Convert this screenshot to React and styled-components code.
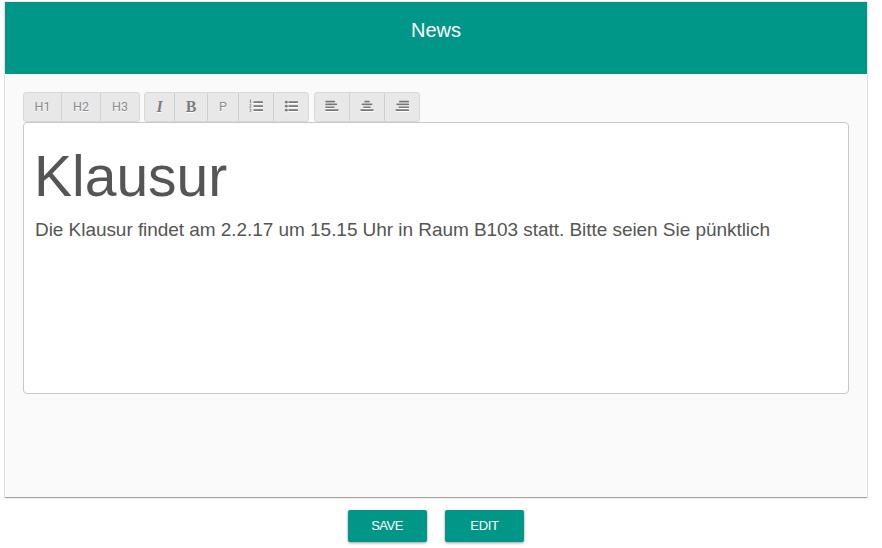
import React from "react";
import styled, { createGlobalStyle } from "styled-components";

const GlobalStyle = createGlobalStyle`
  * { box-sizing: border-box; }
  body { margin: 0; background: #fff; font-family: "Liberation Sans", Arial, sans-serif; }
`;

const Page = styled.main`
  width: 882px;
  height: 548px;
  padding: 2px 15px 0 5px;
  overflow: hidden;
`;

const Card = styled.section`
  height: 495px;
  background: #fafafa;
  box-shadow: 0 1px 1px rgba(0, 0, 0, 0.3), 0 0 1px 1px rgba(0, 0, 0, 0.08);
`;

const Header = styled.header`
  height: 72px;
  padding-top: 16px;
  background: #009688;
  color: #fff;
  font-size: 20px;
  line-height: 24px;
  text-align: center;
`;

const Content = styled.div`
  padding: 18px 18px 0;
`;

const Toolbar = styled.div`
  display: flex;
  height: 30px;
`;

const Group = styled.div`
  display: flex;
  margin-right: ${(p) => p.$gap || 0}px;
  border-radius: 3px;
  overflow: hidden;
  border: 1px solid #d8d8d8;
  background: #e8e8e8;
`;

const Tool = styled.button`
  display: flex;
  align-items: center;
  justify-content: center;
  width: ${(p) => p.$w}px;
  padding: 0 0 ${(p) => (p.$serif ? 0 : 2)}px;
  border: 0;
  border-right: 1px solid #d0d0d0;
  background: none;
  color: ${(p) => (p.$serif ? "#7c7c7c" : "#8a8a8a")};
  font-family: ${(p) => (p.$serif ? '"Liberation Serif", serif' : "Roboto, sans-serif")};
  font-size: ${(p) => (p.$serif ? 16 : 12.5)}px;
  font-style: ${(p) => (p.$italic ? "italic" : "normal")};
  font-weight: ${(p) => (p.$serif ? 700 : 400)};
  text-shadow: 0 1px 0 #fff;
  &:last-child { border-right: 0; }
`;

const Glyph = styled.svg`
  width: 14px;
  height: 14px;
  color: #777;
  filter: drop-shadow(0 1px 0 #fff);
`;

const Editor = styled.div`
  height: 272px;
  padding: 21px 11px;
  border: 1px solid #c8c8c8;
  border-radius: 4px;
  background: #fff;
  color: #555;
`;

const Title = styled.h1`
  margin: 0 0 0 -1px;
  font-size: 57px;
  font-weight: 400;
  line-height: 64px;
`;

const Text = styled.p`
  margin: 10px 0 0;
  font-size: 19px;
  line-height: 24px;
  letter-spacing: -0.05px;
  white-space: nowrap;
`;

const Actions = styled.div`
  display: flex;
  justify-content: center;
  gap: 18px;
  padding-top: 13px;
`;

const Action = styled.button`
  width: 79px;
  height: 32px;
  padding: 0 ${(p) => p.$inset || 0}px 2px 0;
  border: 0;
  border-radius: 2px;
  background: #009688;
  color: #fff;
  font-family: "Liberation Sans", Arial, sans-serif;
  font-size: 13px;
  letter-spacing: ${(p) => p.$spacing || 0}px;
  box-shadow: 0 1px 3px rgba(0, 0, 0, 0.4);
`;

const lines = {
  left: [[0.3, 9.7], [0.3, 11.7], [0.3, 9.2], [0.3, 13.2]],
  center: [[4.3, 5.4], [1.7, 10.6], [3.3, 7.4], [0.5, 13]],
  right: [[4, 10], [1.5, 12.5], [3.7, 10.3], [0.7, 13.3]],
};

function AlignIcon({ kind }) {
  return (
    <Glyph viewBox="0 0 14 14" fill="currentColor" aria-hidden="true">
      {lines[kind].map(([x, w], i) => (
        <rect key={i} x={x} y={1.8 + i * 2.8} width={w} height="1.7" rx="0.4" />
      ))}
    </Glyph>
  );
}

function ListIcon({ numbered }) {
  return (
    <Glyph viewBox="0 0 14 14" fill="currentColor" aria-hidden="true">
      {[3.2, 7.2, 11.2].map((y) => (
        <g key={y}>
          <rect x="4.5" y={y - 0.9} width="9.5" height="1.8" rx="0.3" />
          {!numbered && <circle cx="2.3" cy={y} r="1.4" />}
        </g>
      ))}
      {numbered && (
        <path
          d="M.7 1.3 1.5.8v2.9M.7 3.7h1.6M.6 5.6c.8-.8 1.8-.1 1.3.7L.6 8.2h1.7M.6 10h1.5l-.8 1.2c1.5 0 1 2-.7 1.5"
          fill="none"
          stroke="currentColor"
          strokeWidth="0.8"
        />
      )}
    </Glyph>
  );
}

export default function App() {
  return (
    <>
      <GlobalStyle />
      <Page>
        <Card>
          <Header>News</Header>
          <Content>
            <Toolbar>
              <Group $gap={4}>
                <Tool $w={38}>H1</Tool>
                <Tool $w={39}>H2</Tool>
                <Tool $w={38}>H3</Tool>
              </Group>
              <Group $gap={5}>
                <Tool $w={30} $serif $italic aria-label="Italic">I</Tool>
                <Tool $w={33} $serif aria-label="Bold">B</Tool>
                <Tool $w={31}>P</Tool>
                <Tool $w={35} aria-label="Numbered list"><ListIcon numbered /></Tool>
                <Tool $w={34} aria-label="Bulleted list"><ListIcon /></Tool>
              </Group>
              <Group>
                <Tool $w={35} aria-label="Align left"><AlignIcon kind="left" /></Tool>
                <Tool $w={35} aria-label="Align center"><AlignIcon kind="center" /></Tool>
                <Tool $w={34} aria-label="Align right"><AlignIcon kind="right" /></Tool>
              </Group>
            </Toolbar>
            <Editor>
              <Title>Klausur</Title>
              <Text>Die Klausur findet am 2.2.17 um 15.15 Uhr in Raum B103 statt. Bitte seien Sie pünktlich</Text>
            </Editor>
          </Content>
        </Card>
        <Actions>
          <Action $spacing={-0.5} $inset={1}>SAVE</Action>
          <Action $spacing={-0.3}>EDIT</Action>
        </Actions>
      </Page>
    </>
  );
}
